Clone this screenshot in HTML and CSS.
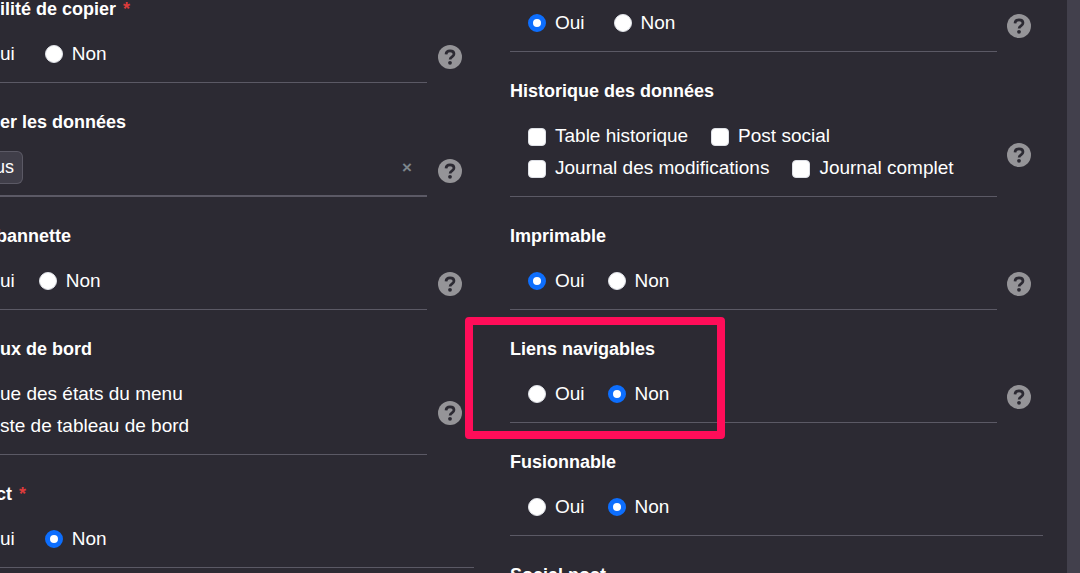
FILE: index.html
```html
<!DOCTYPE html>
<html lang="fr">
<head>
<meta charset="utf-8">
<meta name="viewport" content="width=device-width, initial-scale=1">
<title>Liens navigables</title>
<link rel="stylesheet" href="styles.css">
</head>
<body>
<svg class="sprite" aria-hidden="true">
  <symbol id="help" viewBox="0 0 24 24">
    <circle cx="12" cy="12" r="12" fill="#959498"/>
    <path d="M8 9.3C8.2 6.900 9.800 5.900 12 5.900c2.300 0 4 1.200 4 3.100 0 2.900-3.900 2.700-3.900 5.400" fill="none" stroke="#2c2a33" stroke-width="2.700"/>
    <circle cx="12" cy="17.800" r="1.900" fill="#2c2a33"/>
  </symbol>
</svg>
<main class="panel">
  <section class="column column-left">
    <div class="field">
      <h2 class="title">ilité de copier <span class="required">*</span></h2>
      <div class="body">
        <div class="control spaced">
          <span class="option">ui</span>
          <label class="option"><input class="tick radio" type="radio" name="copier"><span>Non</span></label>
        </div>
        <button class="help" type="button" aria-label="Aide"><svg class="icon"><use href="#help"/></svg></button>
      </div>
    </div>
    <div class="field">
      <h2 class="title">er les données</h2>
      <div class="body">
        <div class="control select">
          <span class="tag">us</span>
          <button class="clear" type="button" aria-label="Effacer">×</button>
        </div>
        <button class="help" type="button" aria-label="Aide"><svg class="icon"><use href="#help"/></svg></button>
      </div>
    </div>
    <div class="field">
      <h2 class="title clipped">bannette</h2>
      <div class="body">
        <div class="control">
          <span class="option">ui</span>
          <label class="option"><input class="tick radio" type="radio" name="bannette"><span>Non</span></label>
        </div>
        <button class="help" type="button" aria-label="Aide"><svg class="icon"><use href="#help"/></svg></button>
      </div>
    </div>
    <div class="field">
      <h2 class="title">ux de bord</h2>
      <div class="body">
        <div class="control stacked">
          <span class="option">ue des états du menu</span>
          <span class="option">ste de tableau de bord</span>
        </div>
        <button class="help" type="button" aria-label="Aide"><svg class="icon"><use href="#help"/></svg></button>
      </div>
    </div>
    <div class="field">
      <h2 class="title clipped">ct <span class="required">*</span></h2>
      <div class="body">
        <div class="control spaced">
          <span class="option">ui</span>
          <label class="option"><input class="tick radio" type="radio" name="contact" checked><span>Non</span></label>
        </div>
      </div>
    </div>
  </section>

  <section class="column column-right">
    <div class="field">
      <div class="body">
        <div class="control spaced">
          <label class="option"><input class="tick radio" type="radio" name="premier" checked><span>Oui</span></label>
          <label class="option"><input class="tick radio" type="radio" name="premier"><span>Non</span></label>
        </div>
        <button class="help" type="button" aria-label="Aide"><svg class="icon"><use href="#help"/></svg></button>
      </div>
    </div>
    <div class="field">
      <h2 class="title">Historique des données</h2>
      <div class="body">
        <div class="control">
          <label class="option"><input class="tick" type="checkbox"><span>Table historique</span></label>
          <label class="option"><input class="tick" type="checkbox"><span>Post social</span></label>
          <span class="break"></span>
          <label class="option"><input class="tick" type="checkbox"><span>Journal des modifications</span></label>
          <label class="option"><input class="tick" type="checkbox"><span>Journal complet</span></label>
        </div>
        <button class="help" type="button" aria-label="Aide"><svg class="icon"><use href="#help"/></svg></button>
      </div>
    </div>
    <div class="field">
      <h2 class="title">Imprimable</h2>
      <div class="body">
        <div class="control">
          <label class="option"><input class="tick radio" type="radio" name="imprimable" checked><span>Oui</span></label>
          <label class="option"><input class="tick radio" type="radio" name="imprimable"><span>Non</span></label>
        </div>
        <button class="help" type="button" aria-label="Aide"><svg class="icon"><use href="#help"/></svg></button>
      </div>
    </div>
    <div class="field highlighted">
      <h2 class="title">Liens navigables</h2>
      <div class="body">
        <div class="control">
          <label class="option"><input class="tick radio" type="radio" name="liens"><span>Oui</span></label>
          <label class="option"><input class="tick radio" type="radio" name="liens" checked><span>Non</span></label>
        </div>
        <button class="help" type="button" aria-label="Aide"><svg class="icon"><use href="#help"/></svg></button>
      </div>
    </div>
    <div class="field">
      <h2 class="title">Fusionnable</h2>
      <div class="body">
        <div class="control">
          <label class="option"><input class="tick radio" type="radio" name="fusionnable"><span>Oui</span></label>
          <label class="option"><input class="tick radio" type="radio" name="fusionnable" checked><span>Non</span></label>
        </div>
      </div>
    </div>
    <div class="field">
      <h2 class="title">Social post</h2>
    </div>
  </section>
</main>
</body>
</html>
```
FILE: styles.css
```css
*, *::after { box-sizing: border-box; }

body {
  margin: 0;
  height: 100vh;
  overflow: hidden;
  background: #2c2a33;
  color: #fff;
  font: 19px/32px "Liberation Sans", Arial, sans-serif;
}

.sprite { display: none; }

.panel {
  display: grid;
  grid-template-columns: 474fr 533fr;
  column-gap: 36px;
  align-items: start;
  min-height: 100vh;
  padding-right: 24px;
  border-right: 13px solid #42404c;
}

.column { min-width: 0; }
.column-left { margin-top: -30px; }

.title {
  margin: 0;
  padding: 26px 0 9px;
  font-size: 18px;
  line-height: 26px;
  font-weight: 700;
}
.column-left .clipped { margin-left: -4px; }

.required {
  margin-left: 2px;
  color: #dc3b3b;
}

.body {
  display: flex;
  align-items: center;
}

.control {
  flex: 1;
  display: flex;
  flex-wrap: wrap;
  column-gap: 23px;
  padding: 7px 0 12px;
  border-bottom: 1px solid #5b5965;
}
.spaced { column-gap: 29px; }
.column-left .control { column-gap: 24px; }
.column-left .spaced { column-gap: 30px; }
.stacked { flex-direction: column; }
.column-right .control { padding-left: 18px; }
.break { flex-basis: 100%; }

.option {
  display: flex;
  align-items: center;
  gap: 9px;
}

.tick {
  appearance: none;
  flex: none;
  width: 18px;
  height: 18px;
  margin: 2px 0 0;
  border: 1px solid #dee0e6;
  border-radius: 4px;
  background: #fff;
}
.radio {
  margin: 0;
  border-radius: 50%;
}
.radio:checked {
  border: 5px solid #0d6efd;
}

.column-left .select {
  justify-content: space-between;
  align-items: center;
  padding: 7px 15px 11px 0;
  border-bottom: 2px solid #5b5965;
}

.tag {
  height: 33px;
  margin-left: -5px;
  padding-right: 8px;
  border: 1px solid #5b5965;
  border-left: 0;
  border-radius: 0 6px 6px 0;
  background: #403e49;
  font-size: 18px;
  line-height: 31px;
}

.clear {
  padding: 0;
  border: 0;
  background: none;
  color: #7d858c;
  font: 700 17px/30px "Liberation Sans", Arial, sans-serif;
}

.help {
  flex: none;
  width: 24px;
  height: 24px;
  margin: 0 12px 0 11px;
  padding: 0;
  border: 0;
  background: none;
}
.column-right .help { margin-left: 10px; }
.icon {
  display: block;
  width: 24px;
  height: 24px;
}

.highlighted { position: relative; }
.highlighted::after {
  content: "";
  position: absolute;
  top: 7px;
  left: -45px;
  width: 260px;
  height: 122px;
  border: 8px solid #ff0d59;
  border-radius: 4px;
  pointer-events: none;
}
```
